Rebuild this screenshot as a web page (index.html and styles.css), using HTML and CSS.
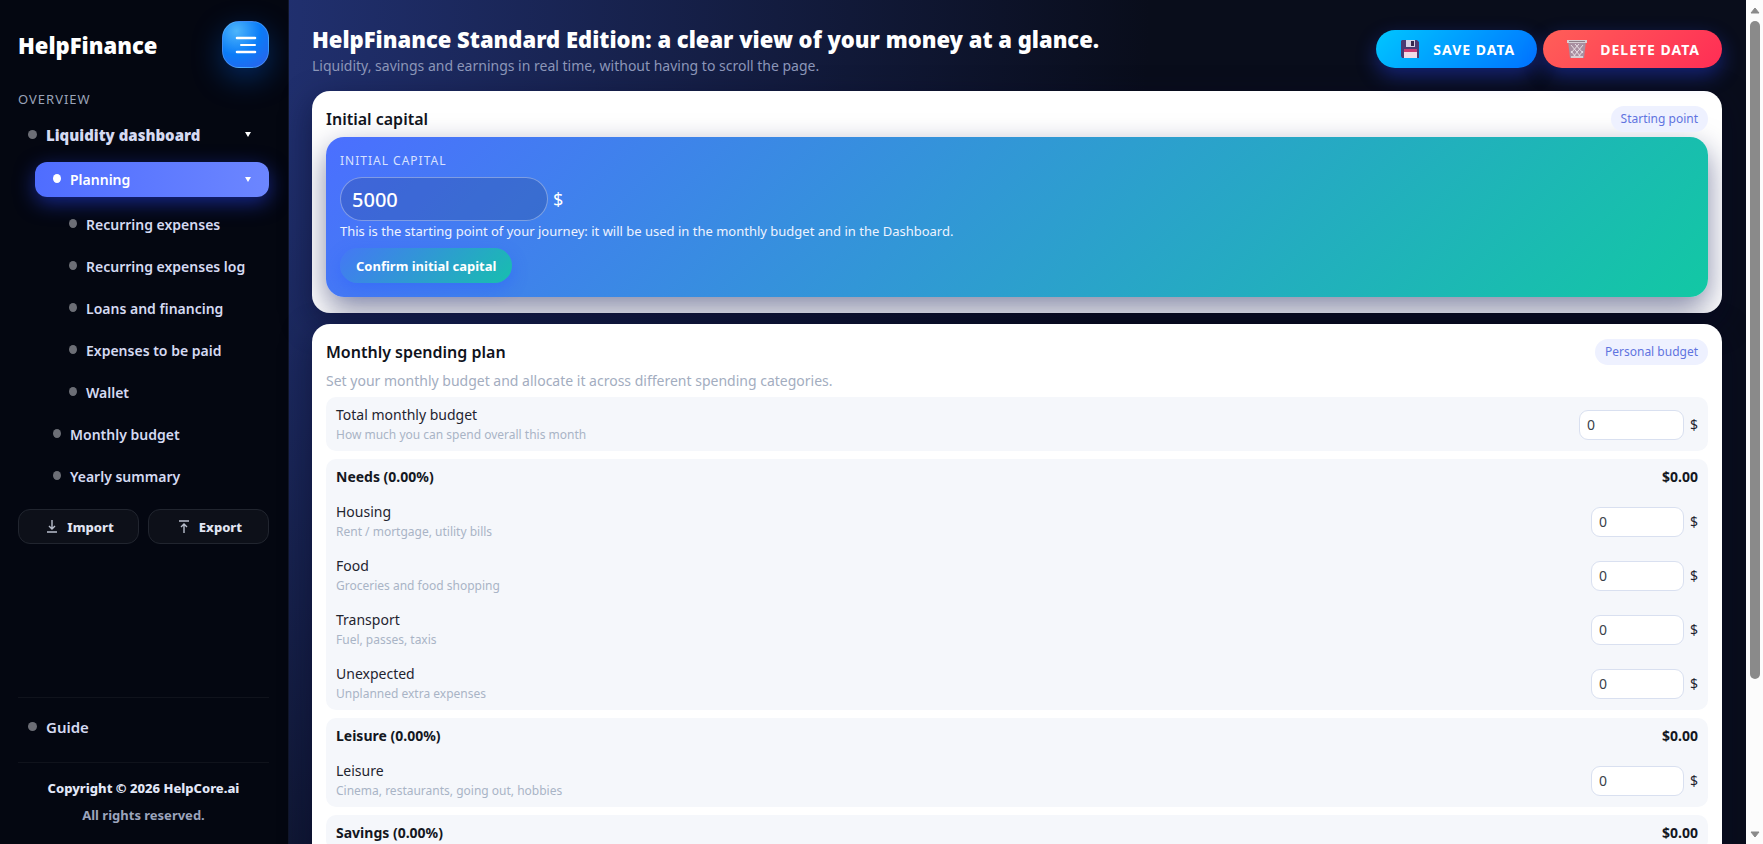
FILE: index.html
```
<!DOCTYPE html>
<html lang="en">
<head>
  <meta charset="UTF-8">
  <title>HelpFinance Standard Edition</title>
  <link rel="stylesheet" href="styles.css">
</head>
<body>

  <aside class="sidebar">
    <div class="sidebar-header">
      <div class="brand">HelpFinance</div>
      <button class="menu-toggle" aria-label="Toggle menu">
        <svg width="22" height="18" viewBox="0 0 22 18" fill="none" stroke="#fff" stroke-width="2.6" stroke-linecap="round">
          <path d="M2 2h18M2 16h18"/>
          <path d="M6 9h14" stroke-width="2"/>
        </svg>
      </button>
    </div>

    <div class="nav-title">Overview</div>
    <nav class="nav">
      <a class="nav-item top" href="#dashboard"><span class="dot"></span>Liquidity dashboard<span class="caret"></span></a>
      <a class="nav-item sub active" href="#planning"><span class="dot"></span>Planning<span class="caret"></span></a>
      <a class="nav-item leaf" href="#recurring"><span class="dot"></span>Recurring expenses</a>
      <a class="nav-item leaf" href="#recurring-log"><span class="dot"></span>Recurring expenses log</a>
      <a class="nav-item leaf" href="#loans"><span class="dot"></span>Loans and financing</a>
      <a class="nav-item leaf" href="#to-pay"><span class="dot"></span>Expenses to be paid</a>
      <a class="nav-item leaf" href="#wallet"><span class="dot"></span>Wallet</a>
      <a class="nav-item sub" href="#monthly"><span class="dot"></span>Monthly budget</a>
      <a class="nav-item sub" href="#yearly"><span class="dot"></span>Yearly summary</a>
    </nav>

    <div class="io-buttons">
      <button class="io-btn">
        <svg width="10" height="13" viewBox="0 0 10 13" fill="none" stroke="#b9bfcd" stroke-width="1.4"><path d="M5 0v9M2 6l3 3 3-3M0 12h10"/></svg>
        Import
      </button>
      <button class="io-btn">
        <svg width="10" height="13" viewBox="0 0 10 13" fill="none" stroke="#b9bfcd" stroke-width="1.4"><path d="M5 13V4M2 7l3-3 3 3M0 1h10"/></svg>
        Export
      </button>
    </div>

    <div class="sidebar-bottom">
      <div class="guide">
        <a class="nav-item top" href="#guide"><span class="dot"></span>Guide</a>
      </div>
      <footer class="copyright">
        <div class="owner">Copyright © 2026 HelpCore.ai</div>
        <div>All rights reserved.</div>
      </footer>
    </div>
  </aside>

  <main class="main">
    <header class="page-header">
      <div>
        <h1>HelpFinance Standard Edition: a clear view of your money at a glance.</h1>
        <p>Liquidity, savings and earnings in real time, without having to scroll the page.</p>
      </div>
      <div class="header-actions">
        <button class="action save">
          <svg width="20" height="20" viewBox="0 0 20 20">
            <path d="M2 1h15l2 2v16H2l-1-2V2z" fill="#4b3a72"/>
            <path d="M6 1h9v7H6z" fill="#d5d2e6"/>
            <path d="M11 2h3v5h-3z" fill="#35284f"/>
            <path d="M4 11h13v8H4z" fill="#f3dbe6"/>
            <path d="M4 10h13v3H4z" fill="#c93a72"/>
          </svg>
          Save data
        </button>
        <button class="action delete">
          <svg width="20" height="20" viewBox="0 0 20 20">
            <path d="M1 2h18l-2 17H3z" fill="#a98fa0"/>
            <path d="M4 6l10 12M8 5l8 9M4 12l5 6M16 6L6 18M12 5l-8 9M16 12l-5 6" stroke="#e9dfe5" fill="none"/>
            <path d="M0 1h20v3H0z" fill="#d6cdd2"/>
            <path d="M2 2h16v1H2z" fill="#8d7f88"/>
            <path d="M4 17h12v2H4z" fill="#d6cdd2"/>
          </svg>
          Delete data
        </button>
      </div>
    </header>

    <section class="card">
      <div class="card-head">
        <h2>Initial capital</h2>
        <span class="pill">Starting point</span>
      </div>
      <div class="hero">
        <label class="hero-label" for="capital">Initial capital</label>
        <div class="hero-row">
          <input class="hero-input" id="capital" type="text" value="5000">
          <span class="hero-currency">$</span>
        </div>
        <p class="hero-text">This is the starting point of your journey: it will be used in the monthly budget and in the Dashboard.</p>
        <button class="confirm">Confirm initial capital</button>
      </div>
    </section>

    <section class="card plan">
      <div class="card-head">
        <h2>Monthly spending plan</h2>
        <span class="pill">Personal budget</span>
      </div>
      <p class="plan-text">Set your monthly budget and allocate it across different spending categories.</p>

      <div class="group">
        <div class="row">
          <label for="total">Total monthly budget<small>How much you can spend overall this month</small></label>
          <input class="amount wide" id="total" type="text" value="0"><span>$</span>
        </div>
      </div>

      <div class="group">
        <div class="group-head"><h3>Needs (0.00%)</h3><strong>$0.00</strong></div>
        <div class="row">
          <label for="housing">Housing<small>Rent / mortgage, utility bills</small></label>
          <input class="amount" id="housing" type="text" value="0"><span>$</span>
        </div>
        <div class="row">
          <label for="food">Food<small>Groceries and food shopping</small></label>
          <input class="amount" id="food" type="text" value="0"><span>$</span>
        </div>
        <div class="row">
          <label for="transport">Transport<small>Fuel, passes, taxis</small></label>
          <input class="amount" id="transport" type="text" value="0"><span>$</span>
        </div>
        <div class="row">
          <label for="unexpected">Unexpected<small>Unplanned extra expenses</small></label>
          <input class="amount" id="unexpected" type="text" value="0"><span>$</span>
        </div>
      </div>

      <div class="group">
        <div class="group-head"><h3>Leisure (0.00%)</h3><strong>$0.00</strong></div>
        <div class="row">
          <label for="leisure">Leisure<small>Cinema, restaurants, going out, hobbies</small></label>
          <input class="amount" id="leisure" type="text" value="0"><span>$</span>
        </div>
      </div>

      <div class="group">
        <div class="group-head"><h3>Savings (0.00%)</h3><strong>$0.00</strong></div>
      </div>
    </section>
  </main>

  <div class="scrollbar" aria-hidden="true">
    <svg width="10" height="7" viewBox="0 0 10 7"><path d="M5 1l4 5H1z" fill="#8a8a8a" stroke="#8a8a8a" stroke-linejoin="round"/></svg>
    <div class="scroll-track"><div class="scroll-thumb"></div></div>
    <svg width="10" height="7" viewBox="0 0 10 7"><path d="M5 6L1 1h8z" fill="#8a8a8a" stroke="#8a8a8a" stroke-linejoin="round"/></svg>
  </div>

</body>
</html>
```
FILE: styles.css
```
* {
  box-sizing: border-box;
}

body {
  margin: 0;
  height: 100vh;
  display: flex;
  overflow: hidden;
  background: #050816;
  font-family: "Segoe UI", "Noto Sans", sans-serif;
  font-size: 14px;
  line-height: 20px;
  color: #1f2430;
}

h1, h2, h3, p {
  margin: 0;
}

button, input {
  font-family: inherit;
}

button {
  cursor: pointer;
}

/* Sidebar */
.sidebar {
  width: 289px;
  flex-shrink: 0;
  padding: 21px 19px 15px 18px;
  display: flex;
  flex-direction: column;
  background: #040711;
  border-right: 1px solid #10162b;
}

.sidebar-header {
  display: flex;
  align-items: center;
  justify-content: space-between;
}

.brand {
  font-size: 22px;
  font-weight: 900;
  line-height: 30px;
  color: #fff;
}

.menu-toggle {
  width: 47px;
  height: 47px;
  padding: 0;
  display: flex;
  align-items: center;
  justify-content: center;
  border: 1px solid rgba(120, 190, 255, 0.4);
  border-radius: 17px;
  background: radial-gradient(circle at 30% 20%, #4db5fb 0, #0a7cf8 50%, #2f5ee8 100%);
  box-shadow: 0 10px 30px rgba(0, 110, 255, 0.35);
}

.nav-title {
  margin-top: 21px;
  font-size: 13px;
  letter-spacing: 1px;
  text-transform: uppercase;
  color: #9aa3b8;
}

.nav {
  margin-top: 8px;
  display: flex;
  flex-direction: column;
  gap: 7px;
}

.nav-item {
  height: 35px;
  padding: 0 18px 0 10px;
  display: flex;
  align-items: center;
  gap: 9px;
  border-radius: 12px;
  font-weight: 600;
  color: #d5daf2;
  text-decoration: none;
}

.nav-item.top {
  font-size: 15px;
}

.nav .top {
  margin-bottom: 3px;
  font-weight: 900;
}

.nav-item.sub {
  margin-left: 17px;
  padding-left: 18px;
}

.nav-item.leaf {
  margin-left: 35px;
  padding-left: 16px;
}

.nav-item.active {
  margin-bottom: 3px;
  color: #fff;
  background: linear-gradient(90deg, #4f6dff, #6c86ff);
  box-shadow: 0 6px 20px rgba(40, 70, 255, 0.5);
}

.dot {
  width: 9px;
  height: 9px;
  border-radius: 50%;
  background: #6c6e76;
}

.sub .dot, .leaf .dot {
  width: 8px;
  margin-bottom: 3px;
}

.active .dot {
  background: #fff;
}

.caret {
  margin-left: auto;
  border: 3px solid transparent;
  border-top: 5px solid #fff;
  border-bottom: 0;
}

.io-buttons {
  margin-top: 15px;
  display: flex;
  gap: 9px;
}

.io-btn {
  flex: 1;
  height: 35px;
  padding: 0 6px 0 10px;
  display: flex;
  align-items: center;
  justify-content: center;
  gap: 10px;
  border: 1px solid #21252f;
  border-radius: 12px;
  background: #0d1019;
  font-size: 13px;
  font-weight: 800;
  color: #e0e4f2;
}

.sidebar-bottom {
  margin-top: auto;
}

.guide {
  padding: 11px 0 18px;
  border-top: 1px solid #10131c;
}

.copyright {
  padding-top: 12px;
  border-top: 1px solid #10131c;
  text-align: center;
  font-size: 13px;
  font-weight: 700;
  line-height: 27px;
  color: #9ba4bc;
}

.owner {
  font-weight: 800;
  color: #e2e7f8;
}

/* Main */
.main {
  flex: 1;
  min-width: 0;
  padding: 25px 24px 0 23px;
  background: radial-gradient(circle at -289px 0, #283b8a 0, #090d1b 1150px);
}

.page-header {
  display: flex;
  align-items: flex-start;
  justify-content: space-between;
  margin-bottom: 13px;
}

.page-header h1 {
  font-size: 22px;
  font-weight: 900;
  line-height: 28px;
  color: #fff;
}

.page-header p {
  line-height: 25px;
  color: #8c96b8;
}

.header-actions {
  padding-top: 5px;
  display: flex;
  gap: 6px;
}

.action {
  height: 38px;
  padding: 0 22px 0 24px;
  display: flex;
  align-items: center;
  gap: 13px;
  border: 0;
  border-radius: 999px;
  font-size: 14px;
  font-weight: 700;
  letter-spacing: 1px;
  text-transform: uppercase;
  color: #fff;
  box-shadow: 0 8px 20px rgba(40, 70, 255, 0.4);
}

.save {
  background: linear-gradient(135deg, #00c6ff, #0072ff);
}

.delete {
  background: linear-gradient(135deg, #ff5f58, #ff2d55);
}

.card {
  margin-bottom: 11px;
  padding: 15px 14px 16px;
  overflow: hidden;
  border-radius: 18px;
  background: #fff;
  box-shadow: 0 10px 30px rgba(5, 8, 40, 0.5);
}

.card-head {
  display: flex;
  align-items: center;
  justify-content: space-between;
  margin-bottom: 5px;
}

.card-head h2 {
  font-size: 16px;
  font-weight: 600;
  color: #10131c;
}

.pill {
  padding: 3px 10px;
  border-radius: 999px;
  background: #eef1ff;
  font-size: 12px;
  color: #5f74e0;
}

.hero {
  padding: 14px;
  border-radius: 18px;
  background: linear-gradient(135deg, #4b6fff, #12c8a4);
  box-shadow: 0 12px 30px rgba(12, 20, 80, 0.5);
  color: #fff;
}

.hero-label {
  display: block;
  font-size: 12px;
  letter-spacing: 1px;
  text-transform: uppercase;
  color: #d8e1ff;
}

.hero-row {
  margin-top: 6px;
  display: flex;
  align-items: center;
  gap: 5px;
}

.hero-input {
  width: 208px;
  height: 44px;
  padding: 0 11px;
  border: 1px solid rgba(255, 255, 255, 0.35);
  border-radius: 999px;
  background: rgba(40, 70, 140, 0.3);
  font-size: 20px;
  font-weight: 500;
  color: #fff;
}

.hero-currency {
  font-size: 18px;
}

.hero-text {
  font-size: 13px;
  color: #eef3ff;
}

.confirm {
  display: block;
  margin-top: 7px;
  height: 35px;
  padding: 0 16px;
  border: 0;
  border-radius: 999px;
  background: linear-gradient(135deg, #4577f5, #17bfae);
  box-shadow: 0 6px 16px rgba(40, 90, 255, 0.4);
  font-size: 13px;
  font-weight: 700;
  color: #fff;
}

.plan {
  min-height: 600px;
}

.plan-text {
  line-height: 22px;
  margin-bottom: 5px;
  color: #a3adbf;
}

.group {
  margin-bottom: 8px;
  border-radius: 10px;
  background: #f5f7fb;
}

.group-head {
  height: 35px;
  padding: 8px 10px 7px;
  display: flex;
  justify-content: space-between;
}

.group-head h3, .group-head strong {
  font-size: 14px;
  font-weight: 700;
  color: #14171f;
}

.row {
  padding: 8px 10px 7px;
  display: flex;
  align-items: center;
  gap: 6px;
}

.row label {
  flex: 1;
}

.row small {
  display: block;
  font-size: 12px;
  line-height: 19px;
  color: #a9b4c6;
}

.amount {
  width: 93px;
  height: 30px;
  padding: 0 7px;
  border: 1px solid #d9e0f0;
  border-radius: 9px;
  background: #fff;
  font-size: 14px;
  color: #3a3f4a;
}

.amount.wide {
  width: 105px;
}

/* Scrollbar */
.scrollbar {
  width: 17px;
  flex-shrink: 0;
  padding: 7px 0 6px;
  display: flex;
  flex-direction: column;
  align-items: center;
  gap: 7px;
  background: #fcfcfc;
}

.scroll-track {
  flex: 1;
}

.scroll-thumb {
  width: 10px;
  height: 82%;
  border-radius: 5px;
  background: #8a8a8a;
}
```
